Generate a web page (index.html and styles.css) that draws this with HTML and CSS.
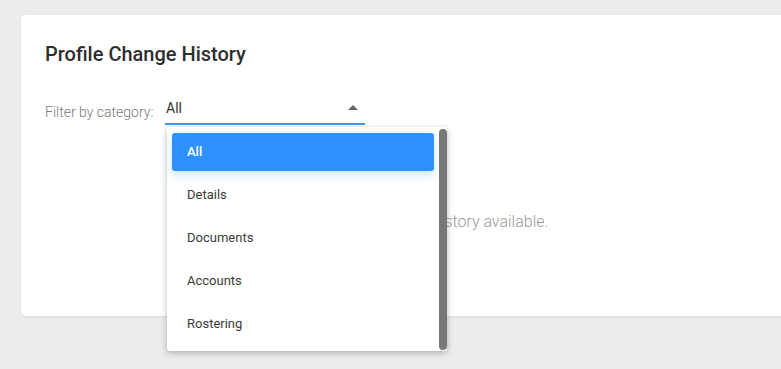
FILE: index.html
```html
<!DOCTYPE html>
<html lang="en">
<head>
<meta charset="utf-8">
<title>Profile Change History</title>
<link rel="stylesheet" href="styles.css">
</head>
<body>
<div class="card">
  <h2 class="title">Profile Change History</h2>
  <div class="filter">
    <span class="filter-label">Filter by category:</span>
    <div class="select">
      <div class="select-value">
        <span>All</span>
        <span class="arrow"></span>
      </div>
      <div class="menu">
        <ul class="menu-list">
          <li class="menu-item active">All</li>
          <li class="menu-item">Details</li>
          <li class="menu-item">Documents</li>
          <li class="menu-item">Accounts</li>
          <li class="menu-item">Rostering</li>
        </ul>
        <div class="scrollbar"></div>
      </div>
    </div>
  </div>
  <p class="empty">No history available.</p>
</div>
</body>
</html>
```

FILE: styles.css
```css
html, body {
  margin: 0;
  padding: 0;
}
body {
  background: #ececec;
  font-family: Roboto, "Liberation Sans", sans-serif;
  overflow: hidden;
  width: 781px;
  height: 369px;
  padding: 15px 0 0 21px;
  box-sizing: border-box;
}
.card {
  width: 914px;
  height: 301px;
  background: #fff;
  border-radius: 5px;
  box-shadow: 0 1px 2px rgba(0,0,0,0.08);
  box-sizing: border-box;
  padding: 27px 24px 0 24px;
}
.title {
  margin: 0;
  font-size: 20px;
  font-weight: 500;
  line-height: 24px;
  color: #2e2e2e;
}
.filter {
  display: flex;
  align-items: flex-start;
  margin-top: 32px;
}
.filter-label {
  font-size: 14px;
  font-weight: 300;
  color: #7a7a7a;
  line-height: 20px;
  padding-top: 4px;
  width: 120px;
}
.select {
  position: relative;
  width: 200px;
}
.select-value {
  display: flex;
  justify-content: space-between;
  align-items: flex-start;
  height: 25px;
  border-bottom: 2px solid #3f9bf5;
  font-size: 14px;
  line-height: 20px;
  color: #333;
  padding: 0 7px 0 1px;
  box-sizing: content-box;
}
.arrow {
  width: 0;
  height: 0;
  margin-top: 7px;
  border-left: 5px solid transparent;
  border-right: 5px solid transparent;
  border-bottom: 5px solid #666;
}
.menu {
  position: absolute;
  left: 2px;
  top: 29px;
  width: 280px;
  height: 224px;
  background: #fff;
  border-radius: 3px;
  box-shadow: 0 2px 6px rgba(0,0,0,0.28);
  display: flex;
  box-sizing: border-box;
  padding: 6px 0 8px 5px;
}
.menu-list {
  list-style: none;
  margin: 0;
  padding: 0;
  width: 262px;
  display: flex;
  flex-direction: column;
  gap: 5px;
}
.menu-item {
  height: 38px;
  line-height: 38px;
  padding-left: 15px;
  font-size: 13px;
  color: #3a3a3a;
  border-radius: 3px;
}
.menu-item.active {
  background: #2d92fe;
  color: #fff;
  font-weight: 500;
  box-shadow: 0 4px 10px rgba(45,146,254,0.25);
}
.scrollbar {
  position: absolute;
  right: 0;
  top: 2px;
  width: 8px;
  height: 221px;
  background: #777;
  border-radius: 4px;
}
.empty {
  margin: 87px 0 0 0;
  text-align: center;
  font-size: 16px;
  font-weight: 300;
  color: #999;
}
```
